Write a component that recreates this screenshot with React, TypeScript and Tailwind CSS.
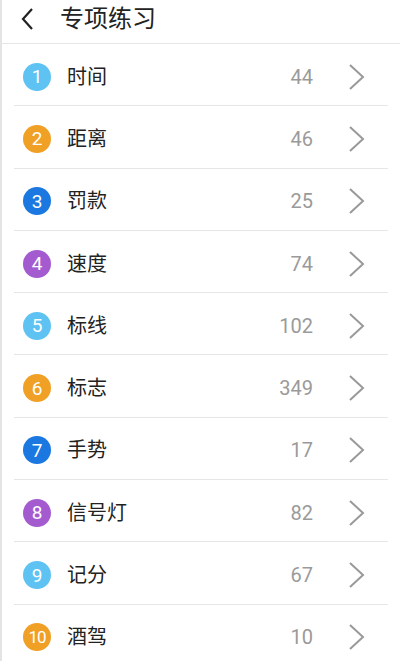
import React from "react";

const items = [
  { n: 1, name: "时间", count: 44, color: "bg-[#5ec3f2]" },
  { n: 2, name: "距离", count: 46, color: "bg-[#f0a024]" },
  { n: 3, name: "罚款", count: 25, color: "bg-[#1a78e0]" },
  { n: 4, name: "速度", count: 74, color: "bg-[#a45bd0]" },
  { n: 5, name: "标线", count: 102, color: "bg-[#5ec3f2]" },
  { n: 6, name: "标志", count: 349, color: "bg-[#f0a024]" },
  { n: 7, name: "手势", count: 17, color: "bg-[#1a78e0]" },
  { n: 8, name: "信号灯", count: 82, color: "bg-[#a45bd0]" },
  { n: 9, name: "记分", count: 67, color: "bg-[#5ec3f2]" },
  { n: 10, name: "酒驾", count: 10, color: "bg-[#f0a024]" },
];

export default function App() {
  return (
    <div
      className="min-h-screen w-[400px] bg-white border-l-2 border-[#e4e4e4] overflow-hidden"
      style={{ fontFamily: "Roboto, 'Noto Sans CJK SC', sans-serif" }}
    >
      <div className="h-[44px] border-b border-[#e6e6e6] flex items-center">
        <svg width="14" height="24" viewBox="0 0 14 24" className="ml-[18px] mb-[6px]">
          <path d="M12 2 L3 12 L12 22" fill="none" stroke="#222" strokeWidth="2.2" />
        </svg>
        <span className="ml-[26px] mb-[5px] text-[24px] text-[#222] leading-none">专项练习</span>
      </div>
      <div className="px-[12px]">
        {items.map((it) => (
          <div key={it.n} className="h-[62.3px] pt-[4px] border-b border-[#e6e6e6] flex items-center">
            <div
              className={`${it.color} w-[28px] h-[28px] rounded-full ml-[9px] flex items-center justify-center text-white ${
                it.n >= 10 ? "text-[17px] tracking-[-1px]" : "text-[19px]"
              } leading-none`}
            >
              {it.n}
            </div>
            <span className="ml-[16px] text-[20px] text-[#222] leading-none">{it.name}</span>
            <span className="ml-auto text-[20px] text-[#9a9a9a] leading-none">{it.count}</span>
            <svg width="18" height="28" viewBox="0 0 18 28" className="ml-[35px] mr-[22px]">
              <path d="M2 2 L15 14 L2 26" fill="none" stroke="#999" strokeWidth="2" />
            </svg>
          </div>
        ))}
      </div>
    </div>
  );
}
